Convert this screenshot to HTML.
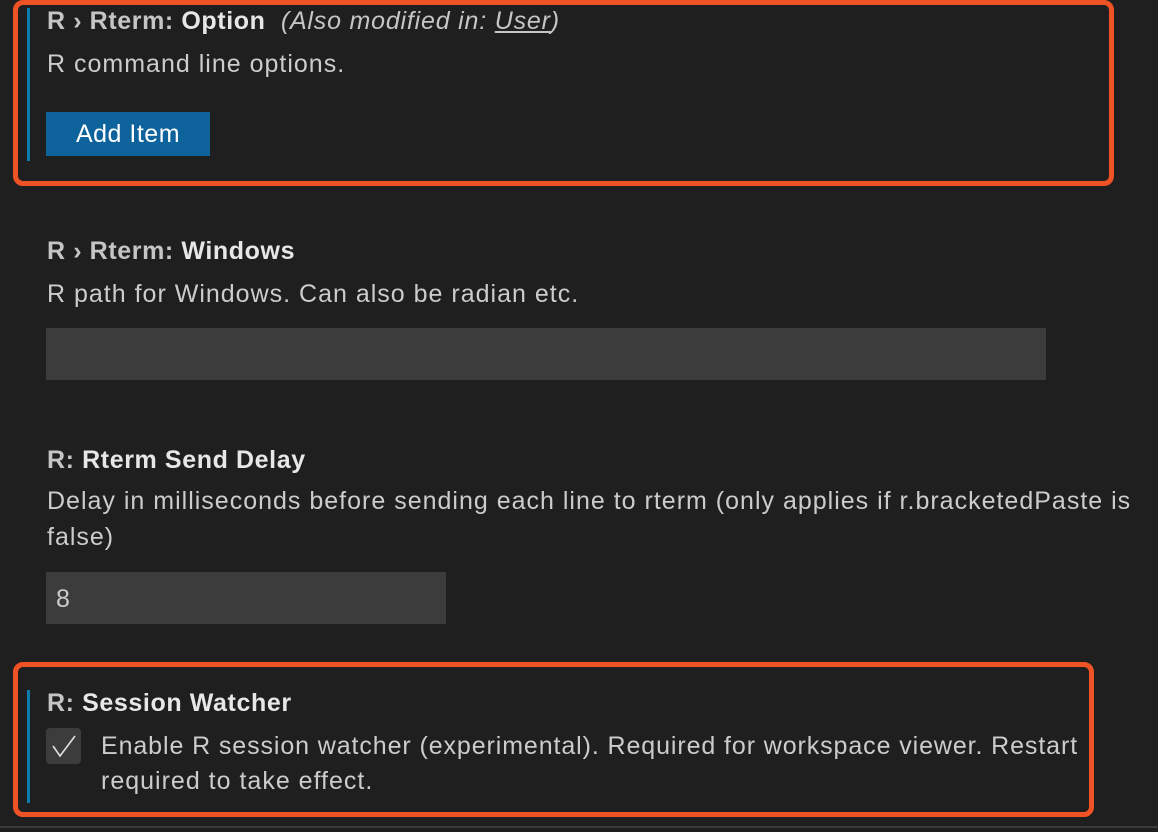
<!DOCTYPE html>
<html><head><style>
body{margin:0;width:1158px;height:832px;background:#1f1f1f;overflow:hidden;font-family:"Liberation Sans",sans-serif;color:#cccccc;position:relative}
.a{position:absolute;white-space:nowrap;font-size:25px;line-height:28px;letter-spacing:1px}
.t{color:#c5c5c5;font-weight:bold;letter-spacing:0.6px}
.t b{color:#e7e7e7}
.box{position:absolute;border:5px solid #ef5325;border-radius:10px;box-sizing:border-box}
.bar{position:absolute;width:3px;background:#0c7dad;left:27px}
.in{position:absolute;background:#3c3c3c}
</style></head><body>
<div class="box" style="left:13px;top:0;width:1101px;height:186px"></div>
<div class="bar" style="top:8px;height:153px"></div>
<div class="a t" style="left:47px;top:7px">R › Rterm: <b>Option</b> <span style="font-weight:normal;font-style:italic;color:#c5c5c5;letter-spacing:0.8px">&nbsp;(Also modified in: <u>User</u>)</span></div>
<div class="a" style="left:47px;top:50px">R command line options.</div>
<div style="position:absolute;left:46px;top:112px;width:164px;height:44px;background:#0e639c;color:#fff;font-size:25px;letter-spacing:0.5px;line-height:44px;text-align:center">Add Item</div>

<div class="a t" style="left:47px;top:237px">R › Rterm: <b>Windows</b></div>
<div class="a" style="left:47px;top:280px">R path for Windows. Can also be radian etc.</div>
<div class="in" style="left:46px;top:328px;width:1000px;height:52px"></div>

<div class="a t" style="left:47px;top:446px">R: <b>Rterm Send Delay</b></div>
<div class="a" style="left:47px;top:487px">Delay in milliseconds before sending each line to rterm (only applies if r.bracketedPaste is</div>
<div class="a" style="left:47px;top:523px">false)</div>
<div class="in" style="left:46px;top:572px;width:400px;height:52px"></div>
<div class="a" style="left:56px;top:585px">8</div>

<div class="box" style="left:13px;top:662px;width:1081px;height:155px"></div>
<div class="bar" style="top:690px;height:113px"></div>
<div class="a t" style="left:47px;top:689px">R: <b>Session Watcher</b></div>
<div style="position:absolute;left:46px;top:728px;width:35px;height:36px;background:#3c3c3c;border-radius:4px"></div>
<svg style="position:absolute;left:46px;top:728px" width="35" height="36"><path d="M7 18 L14 28 L29 8" stroke="#e0e0e0" stroke-width="1.6" fill="none"/></svg>
<div class="a" style="left:101px;top:732px;letter-spacing:0.9px">Enable R session watcher (experimental). Required for workspace viewer. Restart</div>
<div class="a" style="left:101px;top:767px">required to take effect.</div>
<div style="position:absolute;left:0;top:826px;width:1158px;height:2px;background:#3a3a3a"></div>
</body></html>
